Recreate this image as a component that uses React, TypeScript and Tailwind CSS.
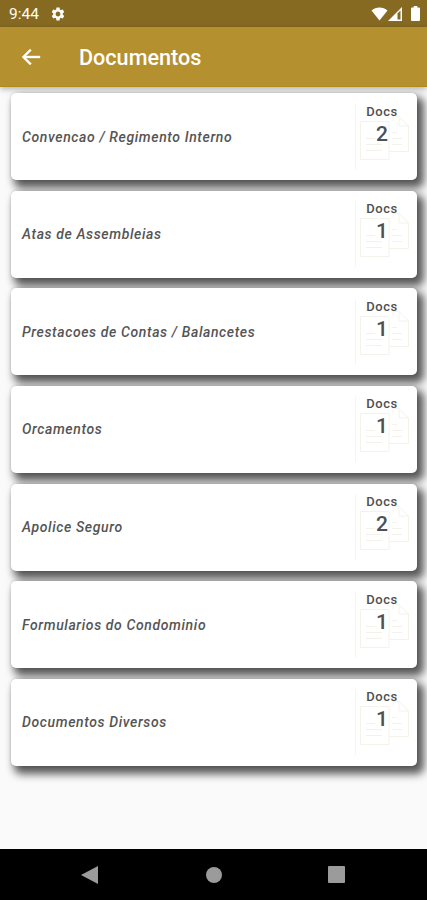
type Folder = {
  name: string;
  docs: number;
};

const folders: Folder[] = [
  { name: "Convencao / Regimento Interno", docs: 2 },
  { name: "Atas de Assembleias", docs: 1 },
  { name: "Prestacoes de Contas / Balancetes", docs: 1 },
  { name: "Orcamentos", docs: 1 },
  { name: "Apolice Seguro", docs: 2 },
  { name: "Formularios do Condominio", docs: 1 },
  { name: "Documentos Diversos", docs: 1 },
];

const StatusBar = () => (
  <div className="flex h-[27px] shrink-0 items-center bg-[#876a22] pl-[9px] pr-[7px] text-white">
    <span className="w-[41px] pt-[2px] text-[15.5px] leading-none text-[#fffdf0]">9:44</span>
    <svg className="h-4 w-4" viewBox="0 0 24 24" fill="currentColor">
      <path d="M19.14 12.94c.04-.3.06-.61.06-.94 0-.32-.02-.64-.07-.94l2.03-1.58c.18-.14.23-.41.12-.61l-1.92-3.32c-.12-.22-.37-.29-.59-.22l-2.39.96c-.5-.38-1.03-.7-1.62-.94l-.36-2.54c-.04-.24-.24-.41-.48-.41h-3.84c-.24 0-.43.17-.47.41l-.36 2.54c-.59.24-1.13.57-1.62.94l-2.39-.96c-.22-.08-.47 0-.59.22L2.74 8.87c-.12.21-.08.47.12.61l2.03 1.58c-.05.3-.09.63-.09.94s.02.64.07.94l-2.03 1.58c-.18.14-.23.41-.12.61l1.92 3.32c.12.22.37.29.59.22l2.39-.96c.5.38 1.03.7 1.62.94l.36 2.54c.05.24.24.41.48.41h3.84c.24 0 .44-.17.47-.41l.36-2.54c.59-.24 1.13-.56 1.62-.94l2.39.96c.22.08.47 0 .59-.22l1.92-3.32c.12-.22.07-.47-.12-.61l-2.01-1.58zM12 15.6c-1.98 0-3.6-1.62-3.6-3.6s1.62-3.6 3.6-3.6 3.6 1.62 3.6 3.6-1.62 3.6-3.6 3.6z" />
    </svg>
    <div className="ml-auto flex items-center">
      <svg className="h-[14px] w-[17px]" viewBox="0 0 17 14" fill="currentColor">
        <path d="M8.5 13.5 0.5 3.4C2.7 1.5 5.5.5 8.5.5s5.8 1 8 2.9z" />
      </svg>
      <svg className="mr-[2px] h-[14px] w-[14px]" viewBox="0 0 14 14">
        <path d="M0 14 14 0v14z" fill="currentColor" />
        <path d="M9.500 6.500 12.500 3.500V12.500h-3z" fill="#876a22" />
      </svg>
      <svg className="ml-[7px] h-[15px] w-[9px]" viewBox="0 0 9 15" fill="currentColor">
        <path d="M2.700 0h3.600v1.500H8a1 1 0 0 1 1 1V14a1 1 0 0 1-1 1H1a1 1 0 0 1-1-1V2.500a1 1 0 0 1 1-1h1.700z" />
      </svg>
    </div>
  </div>
);

const AppBar = () => (
  <header className="flex h-[60px] shrink-0 items-center border-b border-[#af8b1b] bg-[#b5902e] pl-[19px] text-white shadow-[0_2px_6px_rgba(0,0,0,0.3)]">
    <svg className="h-6 w-6" viewBox="0 0 24 24" fill="currentColor" stroke="currentColor" strokeWidth="0.4">
      <path d="M21 11H6.830l5.590-5.590L11 4l-8 8 8 8 1.410-1.410L6.830 13H21z" />
    </svg>
    <h1 className="ml-9 pt-[2px] text-[21.6px] font-medium leading-none">Documentos</h1>
  </header>
);

const PagesIcon = () => (
  <svg className="absolute left-[4px] top-[11px] h-[48px] w-[50px]" viewBox="0 0 50 48" fill="none" stroke="#f5f2e9">
    <path d="M.5 6.500h28.500v38H.5z" />
    <path d="M6 23.500h9M6 29.500h16M6 35.500h16" />
    <path d="M29 36.500h19.500V11L39 1.500H33v5" />
    <path d="M39 1.500V11h9.500M32 17.500h5M32 23.500h10M32 29.500h10" />
  </svg>
);

const FolderCard = ({ folder }: { folder: Folder }) => (
  <li className="flex h-[87px] items-center justify-between rounded-[5px] bg-white pl-[11px] shadow-[5px_6px_8px_2px_rgba(0,0,0,0.65),0_0_3px_rgba(0,0,0,0.15)]">
    <span className="pt-px text-[14px] font-medium italic tracking-[0.62px] text-[#555]">{folder.name}</span>
    <div className="relative mr-[7px] flex h-[66px] w-[55px] flex-col items-center border-l border-[#f7f5f2] pr-[2px] text-[#505050]">
      <PagesIcon />
      <span className="relative text-[13px] font-medium leading-[16px] tracking-[0.6px]">Docs</span>
      <span className="relative mt-[2px] text-[21px] font-medium leading-[24px]">{folder.docs}</span>
    </div>
  </li>
);

const NavigationBar = () => (
  <nav className="flex h-[51px] shrink-0 items-center justify-between bg-black pl-[81px] pr-[82px] text-[#9b9b9b]">
    <svg className="h-[18px] w-[17px]" viewBox="0 0 17 18" fill="currentColor">
      <path d="M0 9 17 0v18z" />
    </svg>
    <span className="ml-px h-4 w-4 rounded-full bg-[#9b9b9b]" />
    <span className="h-[17px] w-[17px] rounded-[1px] bg-[#9b9b9b]" />
  </nav>
);

const App = () => {
  return (
    <div className="flex h-[900px] w-[427px] flex-col overflow-hidden bg-[#fafafa] font-['Roboto',sans-serif]">
      <StatusBar />
      <AppBar />
      <main className="flex-1">
        <ul className="flex flex-col gap-[10.67px] pl-[11px] pr-[10px] pt-[6px]">
          {folders.map((folder) => (
            <FolderCard key={folder.name} folder={folder} />
          ))}
        </ul>
      </main>
      <NavigationBar />
    </div>
  );
};

export default App;
